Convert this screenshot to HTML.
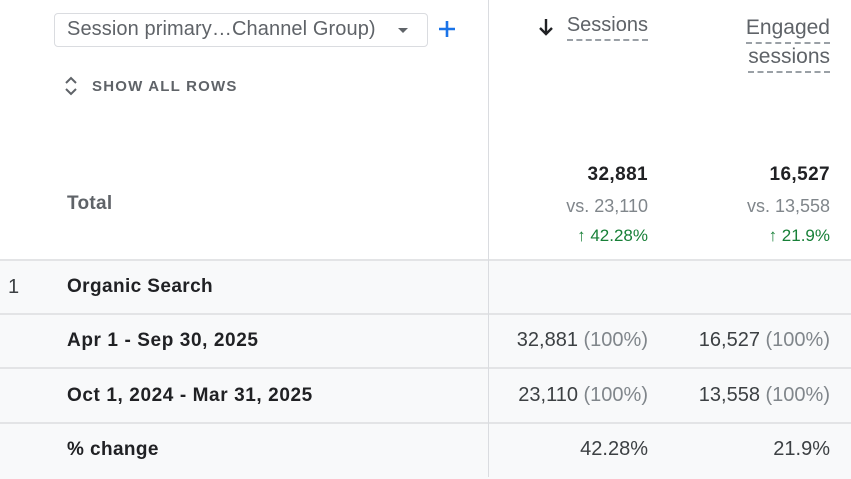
<!DOCTYPE html>
<html><head><style>
body{margin:0;width:851px;height:477px;background:#fff;font-family:"Liberation Sans",Arial,sans-serif;position:relative;overflow:hidden;color:#202124}
.a{position:absolute;white-space:nowrap}
.r{text-align:right}
.vl{position:absolute;left:488px;top:0;width:1px;height:477px;background:#dadce0}
.row{position:absolute;left:0;width:851px;background:#f8f9fa;border-top:2px solid #e3e4e6}
.b{font-weight:bold;font-size:19px;color:#202124;letter-spacing:0.4px}
.n{font-size:20px;color:#3c4043}
.g{color:#80868b}
.dash{border-bottom:2px dashed #9aa0a6;padding-bottom:3px}
</style></head><body>
<div class="row" style="top:259px;height:53px"></div>
<div class="row" style="top:313px;height:53px"></div>
<div class="row" style="top:367px;height:54px"></div>
<div class="row" style="top:422px;height:55px"></div>
<div class="vl"></div>

<div class="a" style="left:54px;top:13px;width:372px;height:32px;border:1px solid #dadce0;border-radius:4px"></div>
<div class="a" style="left:67px;top:18px;font-size:20px;color:#5f6368;letter-spacing:0.1px">Session primary…Channel Group)</div>
<svg class="a" style="left:397px;top:27px" width="12" height="8"><path d="M1 1h10L6 6z" fill="#5f6368"/></svg>
<svg class="a" style="left:437px;top:19px" width="20" height="20"><path d="M10 2v16M2 10h16" stroke="#1a73e8" stroke-width="2.6"/></svg>
<svg class="a" style="left:64px;top:76px" width="14" height="20"><path d="M2 7l5-5 5 5M2 13l5 5 5-5" stroke="#5f6368" stroke-width="2" fill="none"/></svg>
<div class="a" style="left:92px;top:78px;font-size:15px;font-weight:bold;letter-spacing:1.2px;color:#5f6368">SHOW ALL ROWS</div>

<svg class="a" style="left:537px;top:17px" width="18" height="20"><path d="M9 2v15M3 11l6 6 6-6" stroke="#202124" stroke-width="2.4" fill="none"/></svg>
<div class="a r" style="right:203px;top:14px;font-size:20px;color:#5f6368"><span class="dash">Sessions</span></div>
<div class="a r" style="right:21px;top:13px;font-size:21px;color:#5f6368;line-height:29px"><span class="dash">Engaged</span><br><span class="dash">sessions</span></div>

<div class="a" style="left:67px;top:193px;font-size:19px;font-weight:bold;color:#5f6368;letter-spacing:0.3px">Total</div>
<div class="a r b" style="right:203px;top:164px">32,881</div>
<div class="a r b" style="right:21px;top:164px">16,527</div>
<div class="a r g" style="right:203px;top:196px;font-size:18px">vs. 23,110</div>
<div class="a r g" style="right:21px;top:196px;font-size:18px">vs. 13,558</div>
<div class="a r" style="right:203px;top:226px;font-size:17px;color:#188038">↑ 42.28%</div>
<div class="a r" style="right:21px;top:226px;font-size:17px;color:#188038">↑ 21.9%</div>

<div class="a n" style="left:8px;top:276px">1</div>
<div class="a b" style="left:67px;top:276px">Organic Search</div>
<div class="a b" style="left:67px;top:330px;letter-spacing:0.6px">Apr 1 - Sep 30, 2025</div>
<div class="a b" style="left:67px;top:385px;letter-spacing:0.6px">Oct 1, 2024 - Mar 31, 2025</div>
<div class="a b" style="left:67px;top:439px">% change</div>

<div class="a r n" style="right:203px;top:329px">32,881 <span class="g">(100%)</span></div>
<div class="a r n" style="right:21px;top:329px">16,527 <span class="g">(100%)</span></div>
<div class="a r n" style="right:203px;top:384px">23,110 <span class="g">(100%)</span></div>
<div class="a r n" style="right:21px;top:384px">13,558 <span class="g">(100%)</span></div>
<div class="a r n" style="right:203px;top:438px">42.28%</div>
<div class="a r n" style="right:21px;top:438px">21.9%</div>
</body></html>
